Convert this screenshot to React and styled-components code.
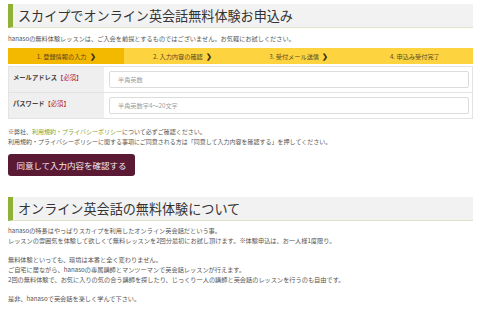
import React from "react";
import styled, { createGlobalStyle, css } from "styled-components";

const GlobalStyle = createGlobalStyle`
  html, body {
    margin: 0;
    padding: 0;
    background: #fff;
  }
  body {
    font-family: "Noto Sans CJK JP", "Noto Sans", sans-serif;
    color: #555;
  }
`;

const Page = styled.div`
  width: 480px;
  box-sizing: border-box;
  padding: 4px 7px 0 8px;
`;

const Heading = styled.h2`
  margin: 0;
  height: 23px;
  display: flex;
  align-items: center;
  padding-left: 5px;
  background: #f2f2f2;
  border-left: 5px solid #8fb236;
  border-bottom: 1px solid #dde3c8;
  font-size: 13.1px;
  font-weight: 400;
  color: #333;
  ${(p) =>
    p.second &&
    css`
      margin-top: 21px;
    `}
`;

const Lead = styled.p`
  margin: 0;
  height: 20px;
  display: flex;
  align-items: center;
  font-size: 6.2px;
  color: #555;
`;

const Steps = styled.ol`
  list-style: none;
  margin: 0;
  padding: 0;
  display: grid;
  grid-template-columns: repeat(4, 1fr);
  height: 16px;
  background: #fdd340;
`;

const Step = styled.li`
  display: flex;
  align-items: center;
  justify-content: center;
  gap: 3px;
  font-size: 6.2px;
  color: #5a4a20;
  ${(p) =>
    p.active &&
    css`
      background: #f3b800;
    `}
`;

const Chevron = styled.span`
  font-weight: 700;
  color: #3a3010;
  font-size: 6.5px;
`;

const Table = styled.div`
  margin-top: 2px;
  border: 1px solid #e3e3e3;
`;

const Row = styled.div`
  display: grid;
  grid-template-columns: 95px 1fr;
  height: 25px;
  & + & {
    border-top: 1px solid #e3e3e3;
  }
`;

const Label = styled.div`
  background: #efefef;
  padding: 6px 0 0 4px;
  font-size: 6.3px;
  font-weight: 700;
  color: #444;
`;

const Req = styled.span`
  color: #b5263b;
  font-weight: 400;
`;

const Cell = styled.div`
  display: flex;
  align-items: center;
  padding: 0 3px 0 5px;
`;

const Input = styled.input`
  width: 100%;
  height: 17px;
  box-sizing: border-box;
  border: 1px solid #dcdcdc;
  border-radius: 2px;
  padding: 0 8px;
  font-family: inherit;
  font-size: 6.2px;
  color: #555;
  outline: none;
  &::placeholder {
    color: #a0a0a0;
  }
`;

const Notes = styled.div`
  margin-top: 8px;
  font-size: 6px;
  line-height: 10px;
  color: #555;
`;

const Link = styled.a`
  color: #7fa332;
  text-decoration: none;
`;

const Submit = styled.button`
  margin-top: 7px;
  width: 127px;
  height: 22px;
  border: none;
  border-radius: 3px;
  background: #5b1a34;
  color: #f6eaea;
  font-family: "Noto Sans CJK JP", sans-serif;
  font-size: 8.5px;
  padding: 0;
`;

const Body = styled.div`
  margin-top: 5px;
  font-size: 6.2px;
  line-height: 10px;
  color: #555;
  p {
    margin: 0 0 9px;
  }
`;

export default function App() {
  return (
    <Page>
      <GlobalStyle />
      <Heading>スカイプでオンライン英会話無料体験お申込み</Heading>
      <Lead>
        hanasoの無料体験レッスンは、ご入会を前提とするものではございません。お気軽にお試しください。
      </Lead>
      <Steps>
        <Step active>
          1. 登録情報の入力 <Chevron>❯</Chevron>
        </Step>
        <Step>
          2. 入力内容の確認 <Chevron>❯</Chevron>
        </Step>
        <Step>
          3. 受付メール送信 <Chevron>❯</Chevron>
        </Step>
        <Step>4. 申込み受付完了</Step>
      </Steps>
      <Table>
        <Row>
          <Label>
            メールアドレス<Req>【必須】</Req>
          </Label>
          <Cell>
            <Input placeholder="半角英数" />
          </Cell>
        </Row>
        <Row>
          <Label>
            パスワード<Req>【必須】</Req>
          </Label>
          <Cell>
            <Input type="password" placeholder="半角英数字4～20文字" />
          </Cell>
        </Row>
      </Table>
      <Notes>
        ※弊社、<Link href="#">利用規約・プライバシーポリシー</Link>について必ずご確認ください。
        <br />
        利用規約・プライバシーポリシーに関する事項にご同意される方は「同意して入力内容を確認する」を押してください。
      </Notes>
      <Submit>同意して入力内容を確認する</Submit>
      <Heading second>オンライン英会話の無料体験について</Heading>
      <Body>
        <p>
          hanasoの特長はやっぱりスカイプを利用したオンライン英会話だという事。
          <br />
          レッスンの雰囲気を体験して欲しくて無料レッスンを2回分最初にお試し頂けます。※体験申込は、お一人様1度限り。
        </p>
        <p>
          無料体験といっても、環境は本番と全く変わりません。
          <br />
          ご自宅に居ながら、hanasoの専属講師とマンツーマンで英会話レッスンが行えます。
          <br />
          2回の無料体験で、お気に入りの気の合う講師を探したり、じっくり一人の講師と英会話のレッスンを行うのも自由です。
        </p>
        <p>是非、hanasoで英会話を楽しく学んで下さい。</p>
      </Body>
    </Page>
  );
}
